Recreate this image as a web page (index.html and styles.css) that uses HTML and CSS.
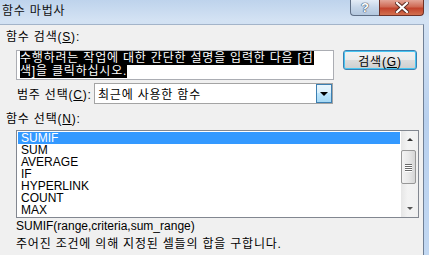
FILE: index.html
```html
<!DOCTYPE html>
<html lang="ko">
<head>
    <meta charset="UTF-8">
    <title>함수 마법사</title>
    <link rel="stylesheet" href="styles.css">
</head>
<body>
    <div class="titlebar">
        <span class="title">함수 마법사</span>
        <div class="caption-btns">
            <div class="cap help">?</div>
            <div class="cap close">
                <svg width="14" height="11" viewBox="0 0 14 11">
                    <path d="M2 1 L12 10 M12 1 L2 10" stroke="#5a2a22" stroke-width="4" stroke-linecap="square"/>
                    <path d="M2 1 L12 10 M12 1 L2 10" stroke="#fff" stroke-width="2.2" stroke-linecap="square"/>
                </svg>
            </div>
        </div>
    </div>

    <div class="client">
        <div class="label">함수 검색(<u>S</u>):</div>
        <div class="search-row">
            <div class="textbox"><span class="selected-text">수행하려는 작업에 대한 간단한 설명을 입력한 다음 [검<br>색]을 클릭하십시오.</span></div>
            <button class="btn">검색(<u>G</u>)</button>
        </div>

        <div class="category-row">
            <span class="row-label">범주 선택(<u>C</u>):</span>
            <div class="combo">
                <span class="combo-value">최근에 사용한 함수</span>
                <div class="drop-btn"><span class="arrow-down"></span></div>
            </div>
        </div>

        <div class="label list-label">함수 선택(<u>N</u>):</div>
        <div class="listbox">
            <ul class="items">
                <li class="active">SUMIF</li>
                <li>SUM</li>
                <li>AVERAGE</li>
                <li>IF</li>
                <li>HYPERLINK</li>
                <li>COUNT</li>
                <li>MAX</li>
            </ul>
            <div class="scrollbar">
                <div class="sb-btn"><span class="sb-up"></span></div>
                <div class="sb-track">
                    <div class="thumb"><span></span><span></span><span></span><span></span></div>
                </div>
                <div class="sb-btn"><span class="sb-down"></span></div>
            </div>
        </div>

        <div class="syntax">SUMIF(range,criteria,sum_range)</div>
        <div class="desc">주어진 조건에 의해 지정된 셀들의 합을 구합니다.</div>
    </div>
</body>
</html>
```

FILE: styles.css
```css
* {
    box-sizing: border-box;
}
body {
    margin: 0;
    width: 429px;
    height: 255px;
    overflow: hidden;
    font-family: "Liberation Sans", "Noto Sans CJK KR", sans-serif;
    font-size: 12px;
    letter-spacing: 0.8px;
    color: #000;
    background: linear-gradient(to bottom, #bed3ec, #d3e2f3 20px, #b8d0ee 120px, #c2d8f2);
}
.titlebar {
    height: 24px;
    display: flex;
    justify-content: space-between;
}
.title {
    padding: 3px 0 0 2px;
    line-height: 16px;
    color: #111;
}
.caption-btns {
    display: flex;
    height: 16px;
    margin-right: 5px;
}
.cap {
    display: flex;
    align-items: center;
    justify-content: center;
    border: 1px solid #5f6f86;
    border-top: none;
}
.help {
    width: 29px;
    border-right: none;
    border-radius: 0 0 0 4px;
    background: linear-gradient(to bottom, #e4ecf6, #c5d5e8 50%, #b3c7de);
    color: #fff;
    font-weight: bold;
    font-size: 13px;
    letter-spacing: 0;
    text-shadow: 0 0 1px #3a4a60, 0 0 1px #3a4a60, 0 0 1px #3a4a60;
}
.close {
    width: 45px;
    border-color: #6e3127;
    border-radius: 0 0 4px 0;
    background: linear-gradient(to bottom, #e3a597, #cf6a55 45%, #c2432c 55%, #d2704f);
}
.client {
    width: 424px;
    height: 231px;
    background: #f0f0f0;
    border-top: 1px solid #a3b4c9;
    border-right: 1px solid #6f7f95;
    padding-top: 5px;
}
.label {
    padding-left: 6px;
    line-height: 14px;
}
.search-row {
    display: flex;
    align-items: flex-start;
    margin-top: 6px;
    padding-left: 16px;
}
.textbox {
    width: 318px;
    height: 30px;
    border: 1px solid #abadb3;
    background: #fff;
    padding: 1px 3px;
    line-height: 13px;
}
.selected-text {
    background: #000;
    color: #fff;
}
.btn {
    width: 74px;
    height: 20px;
    margin-left: 9px;
    padding: 0;
    font-family: inherit;
    font-size: 12px;
    letter-spacing: 0.8px;
    border: 1px solid #3c7fb1;
    border-radius: 3px;
    box-shadow: inset 0 0 0 1px #48c5f1;
    background: linear-gradient(to bottom, #f2f2f2, #ebebeb 50%, #dddddd 50%, #cfcfcf);
}
.category-row {
    display: flex;
    align-items: center;
    margin-top: 3px;
    height: 21px;
}
.row-label {
    width: 94px;
    padding-left: 17px;
}
.combo {
    width: 239px;
    height: 21px;
    display: flex;
    align-items: center;
    justify-content: space-between;
    border: 1px solid #a4a4a4;
    background: #fff;
    padding: 0 0 0 3px;
}
.drop-btn {
    width: 16px;
    height: 19px;
    display: flex;
    align-items: center;
    justify-content: center;
    border: 1px solid #3c7fb1;
    background: linear-gradient(to bottom, #eaf6fd, #d9f0fc 50%, #bee6fd 50%, #a7d9f5);
}
.arrow-down {
    border-left: 4px solid transparent;
    border-right: 4px solid transparent;
    border-top: 4px solid #000;
}
.list-label {
    margin-top: 8px;
}
.listbox {
    display: flex;
    width: 403px;
    height: 88px;
    margin: 4px 0 0 16px;
    border: 1px solid #828790;
    background: #fff;
}
.items {
    flex: 1;
    list-style: none;
    margin: 0;
    padding: 1px 1px 0 1px;
    line-height: 12px;
    letter-spacing: 0;
}
.items li {
    padding-left: 3px;
}
.items li.active {
    background: #3399ff;
    color: #fff;
}
.scrollbar {
    width: 17px;
    display: flex;
    flex-direction: column;
    background: linear-gradient(to right, #e6e6e6, #f3f3f3 40%, #f0f0f0);
}
.sb-btn {
    height: 17px;
    display: flex;
    align-items: center;
    justify-content: center;
}
.sb-up {
    border-left: 3px solid transparent;
    border-right: 3px solid transparent;
    border-bottom: 3px solid #333;
}
.sb-down {
    border-left: 3px solid transparent;
    border-right: 3px solid transparent;
    border-top: 3px solid #555;
}
.sb-track {
    flex: 1;
    padding-top: 2px;
}
.thumb {
    width: 15px;
    height: 34px;
    border: 1px solid #979797;
    border-radius: 2px;
    background: linear-gradient(to right, #f3f3f3, #e8e8e8 50%, #d6d6d6);
    display: flex;
    flex-direction: column;
    justify-content: center;
    align-items: center;
    gap: 1px;
}
.thumb span {
    width: 7px;
    height: 1px;
    background: #6a6a6a;
    box-shadow: 0 1px 0 #fff;
}
.syntax {
    padding-left: 16px;
    margin-top: 1px;
    line-height: 14px;
    letter-spacing: 0;
}
.desc {
    padding-left: 16px;
    margin-top: 4px;
    line-height: 15px;
}
```
